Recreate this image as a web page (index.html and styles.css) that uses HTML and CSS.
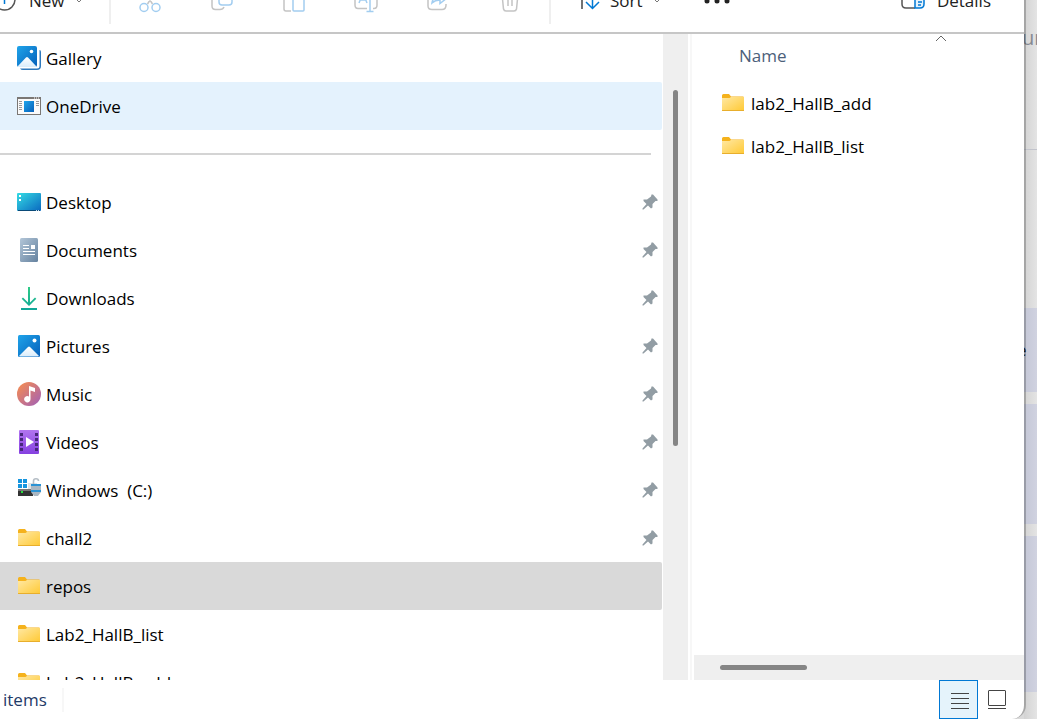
FILE: index.html
```html
<!DOCTYPE html>
<html lang="en">
<head>
<meta charset="utf-8">
<title>File Explorer</title>
<link rel="stylesheet" href="styles.css">
</head>
<body>
<svg class="defs" width="0" height="0" aria-hidden="true">
  <defs>
    <linearGradient id="gFolder" x1="0" y1="0" x2="1" y2="1"><stop offset="0" stop-color="#ffe8a3"/><stop offset="1" stop-color="#ffc934"/></linearGradient>
    <linearGradient id="gBlue" x1="0" y1="0" x2="1" y2="1"><stop offset="0" stop-color="#1fa4ea"/><stop offset="1" stop-color="#0660ba"/></linearGradient>
    <linearGradient id="gDesk" x1="0" y1="0" x2="1" y2="1"><stop offset="0" stop-color="#35dce4"/><stop offset="1" stop-color="#0a68c0"/></linearGradient>
    <linearGradient id="gDoc" x1="0" y1="0" x2="1" y2="1"><stop offset="0" stop-color="#b3c6d8"/><stop offset="1" stop-color="#65829f"/></linearGradient>
    <linearGradient id="gDown" x1="0" y1="0" x2="0" y2="1"><stop offset="0" stop-color="#2fcb86"/><stop offset="1" stop-color="#0fa699"/></linearGradient>
    <linearGradient id="gMusic" x1="0" y1="0" x2="1" y2="1"><stop offset="0.1" stop-color="#f18a56"/><stop offset="0.9" stop-color="#a964ae"/></linearGradient>
    <linearGradient id="gVideo" x1="0" y1="0" x2="0" y2="1"><stop offset="0" stop-color="#b275f0"/><stop offset="1" stop-color="#8540e0"/></linearGradient>
    <linearGradient id="gHill" x1="0" y1="0" x2="0" y2="1"><stop offset="0" stop-color="#ffffff"/><stop offset="1" stop-color="#d9ecfb"/></linearGradient>
    <symbol id="folder" viewBox="0 0 24 24">
      <path fill="#f5b21c" d="M1 4.500Q1 3 2.500 3H8l2 2.500H22.500V10H1z"/>
      <path fill="url(#gFolder)" d="M1 7H8.500L10 6H23V20H1z"/>
      <path fill="#e8ae2c" d="M1 19H23V19.500Q23 20 22 20H2Q1 20 1 19.500z"/>
    </symbol>
    <symbol id="pin" viewBox="0 0 16 16">
      <path fill="#929da4" d="M9.500 0.500L11 0.500L15.500 5.500V7H13.500L10.500 10V13.500L9 14.500L6 11.500L1.500 15.500H0.500V14.500L4.500 10L1.500 7V5.500H5L9 2.500z"/>
    </symbol>
  </defs>
</svg>

<div class="window">
  <header class="toolbar">
    <div class="toolbar-row">
      <button class="tool tool-new" type="button">
        <svg width="16" height="22" viewBox="6 0 16 22"><circle cx="10.500" cy="9.500" r="10.500" fill="none" stroke="#555" stroke-width="1.500"/><path d="M10.500 4v10M5.500 9h10" stroke="#0078d4" stroke-width="1.500"/></svg>
        <span>New</span>
        <svg width="8" height="8" viewBox="0 0 8 8"><path d="M1 2l3 3 3-3" fill="none" stroke="#777"/></svg>
      </button>
      <span class="divider"></span>
      <button class="tool tool-icon" type="button" aria-label="Cut"><svg width="24" height="24" viewBox="0 0 24 24" fill="none" stroke-width="1.500"><path d="M5 0L14.500 15M19 0L9.500 15" stroke="#c4c4c4"/><circle cx="6" cy="18.500" r="4" stroke="#a2cdf0"/><circle cx="18" cy="18.500" r="4" stroke="#a2cdf0"/></svg></button>
      <button class="tool tool-icon" type="button" aria-label="Copy"><svg width="24" height="24" viewBox="0 0 24 24" fill="none" stroke-width="1.500"><path d="M5 6Q2 6 2 9V17Q2 20.500 5.500 20.500H10Q13 20.500 14 18" stroke="#c4c4c4"/><rect x="9" y="2" width="13" height="14" rx="3" stroke="#a2cdf0"/></svg></button>
      <button class="tool tool-icon" type="button" aria-label="Paste"><svg width="24" height="24" viewBox="0 0 24 24" fill="none" stroke-width="1.500"><path d="M9 22H4Q2 22 2 20V2H18" stroke="#c4c4c4"/><rect x="11" y="7" width="11" height="15" rx="1" stroke="#a2cdf0"/></svg></button>
      <button class="tool tool-icon" type="button" aria-label="Rename"><svg width="24" height="24" viewBox="0 0 24 24" fill="none" stroke-width="1.500"><path d="M13 3H4Q1 3 1 6V16Q1 19.500 4 19.500H13M19 3H20Q23 3 23 6V16Q23 19.500 20 19.500H19" stroke="#c4c4c4"/><path d="M5 14L9 4l4 10M6 11h6M16 1V22M12.500 22.500H19.500" stroke="#a2cdf0"/></svg></button>
      <button class="tool tool-icon" type="button" aria-label="Share"><svg width="24" height="24" viewBox="0 0 24 24" fill="none" stroke-width="1.500"><path d="M9 3H6Q2 3 2 7V17Q2 20.500 6 20.500H16Q20 20.500 20 16V15" stroke="#c4c4c4"/><path d="M6 14Q7 7 14 7V3L21 9L14 14.500V11Q9 11 6 14z" stroke="#a2cdf0"/></svg></button>
      <button class="tool tool-icon" type="button" aria-label="Delete"><svg width="24" height="24" viewBox="0 0 24 24" fill="none" stroke="#c4c4c4" stroke-width="1.500"><path d="M2 5H22M4 5L5.500 20Q6 22 8 22H16Q18 22 18.500 20L20 5M10 9V17M14 9V17"/></svg></button>
      <span class="divider"></span>
      <button class="tool tool-sort" type="button">
        <svg width="20" height="20" viewBox="0 0 20 20" fill="none" stroke-width="1.500"><path d="M2 2V18" stroke="#444"/><path d="M12.500 2V17.500M6 11l6.500 6.500 6.500-6.500" stroke="#0078d4"/></svg>
        <span>Sort</span>
        <svg width="8" height="8" viewBox="0 0 8 8"><path d="M1 2l3 3 3-3" fill="none" stroke="#777"/></svg>
      </button>
      <button class="tool tool-more" type="button" aria-label="See more"><svg width="26" height="6" viewBox="0 0 26 6" fill="#222"><circle cx="3" cy="3" r="2.500"/><circle cx="13" cy="3" r="2.500"/><circle cx="23" cy="3" r="2.500"/></svg></button>
      <button class="tool tool-details" type="button">
        <svg width="24" height="20" viewBox="0 0 24 20" fill="none" stroke-width="1.500"><path d="M14 2H5Q1 2 1 6V13Q1 17 5 17H14" stroke="#555"/><path d="M14 2H19Q23 2 23 6V13Q23 17 19 17H14zM17 8h4M17 11h4M17 14h3" fill="#e6f3fc" stroke="#0078d4"/></svg>
        <span>Details</span>
      </button>
    </div>
  </header>

  <main class="panes">
    <nav class="nav" aria-label="Folders">
      <a class="item" href="#"><svg class="icon" viewBox="0 0 24 24"><path d="M22.500 4Q24 4 24 6V20Q24 24 20 24H6Q4 24 3 22.500H20Q22.500 22.500 22.500 20z" fill="#2e79bd"/><rect width="20" height="21" rx="2" fill="url(#gBlue)"/><path d="M0.500 20.500L9 11.500Q10 10.500 11 11.500L19.500 20.500Q19 21 18 21H2Q1 21 0.500 20.500z" fill="url(#gHill)"/><circle cx="14.500" cy="5.500" r="1.800" fill="#fff"/></svg><span>Gallery</span></a>
      <a class="item item-hover" href="#"><svg class="icon" viewBox="0 0 24 24"><rect x="0.500" y="3.500" width="23" height="17" fill="#fafafa" stroke="#7a7774"/><path d="M0 3H24V5H0z" fill="#7a7774"/><path d="M17 4h1M19 4h1M21 4h1" stroke="#fff"/><path d="M2 7.500h3M2 9.500h3M2 11.500h3M2 13.500h3M2 15.500h3M19 7.500h3M19 9.500h3M19 11.500h3" stroke="#999"/><rect x="7" y="7" width="10" height="11" fill="url(#gBlue)"/></svg><span>OneDrive</span></a>
      <hr class="separator">
      <a class="item" href="#"><svg class="icon" viewBox="0 0 24 24"><rect y="3" width="24" height="18" rx="1" fill="url(#gDesk)"/><path d="M1 20H23V21H1z" fill="#0a4a78"/><path d="M19 20.500h1M21 20.500h1" stroke="#cde"/><path d="M2 5h2v2H2zM2 9h2v2H2z" fill="#fff"/></svg><span>Desktop</span><svg class="pin"><use href="#pin"/></svg></a>
      <a class="item" href="#"><svg class="icon" viewBox="0 0 24 24"><rect x="3" width="18" height="24" rx="1.500" fill="url(#gDoc)"/><path d="M6 7.500h6M6 10.500h6M6 13.500h12M6 16.500h12" stroke="#fff"/><rect x="14" y="7" width="4" height="4" fill="#fff"/></svg><span>Documents</span><svg class="pin"><use href="#pin"/></svg></a>
      <a class="item" href="#"><svg class="icon" viewBox="0 0 24 24"><path fill="url(#gDown)" d="M11 1h2V16.500L18 11.500l1.300 1.300L12 20 4.700 12.800 6 11.500l5 5zM4 22H20V24H4z"/></svg><span>Downloads</span><svg class="pin"><use href="#pin"/></svg></a>
      <a class="item" href="#"><svg class="icon" viewBox="0 0 24 24"><rect x="1" y="1" width="22" height="22" rx="1.500" fill="url(#gBlue)"/><path d="M2 22L11 13Q12 12 13 13L22 22Q21 22.500 20.500 22.500H3.500Q3 22.500 2 22z" fill="url(#gHill)"/><circle cx="17.500" cy="6.500" r="2" fill="#fff"/></svg><span>Pictures</span><svg class="pin"><use href="#pin"/></svg></a>
      <a class="item" href="#"><svg class="icon" viewBox="0 0 24 24"><circle cx="12" cy="12" r="12" fill="url(#gMusic)"/><path d="M12 4L18 6V10L13.500 8.500V17A3.200 3.200 0 1 1 12 14.500z" fill="#fff"/></svg><span>Music</span><svg class="pin"><use href="#pin"/></svg></a>
      <a class="item" href="#"><svg class="icon" viewBox="0 0 24 24"><rect x="2" width="20" height="24" rx="1" fill="url(#gVideo)"/><path d="M3 3h3v3H3zM3 8h3v3H3zM3 13h3v3H3zM3 18h3v3H3zM18 3h3v3h-3zM18 8h3v3h-3zM18 13h3v3h-3zM18 18h3v3h-3z" fill="#48277c"/><path d="M9 7L17 12L9 17z" fill="#fff"/></svg><span>Videos</span><svg class="pin"><use href="#pin"/></svg></a>
      <a class="item" href="#"><svg class="icon" viewBox="0 0 24 24"><path d="M11 5H20V13H11z" fill="#dfe3e6"/><path d="M1 1h4v4H1zM6 1h4v4H6zM1 6h4v4H1zM6 6h4v4H6z" fill="#1595df"/><path d="M1 11H14V13H1z" fill="#777"/><path d="M1 13H16V18H1z" fill="#333"/><path d="M4 13h2v2H4z" fill="#25e03c"/><path d="M16.500 6V3Q16.500 0.800 19 0.800T21.500 3" fill="none" stroke="#b4bdc5" stroke-width="1.600"/><path d="M14 6H24V14L21 18H17L14 14z" fill="#aab7c2"/><path d="M14 6H24V8H14zM14 12H24V14H14z" fill="#2c93d4"/></svg><span class="drive">Windows  (C:)</span><svg class="pin"><use href="#pin"/></svg></a>
      <a class="item" href="#"><svg class="icon"><use href="#folder"/></svg><span>chall2</span><svg class="pin"><use href="#pin"/></svg></a>
      <a class="item item-selected" href="#"><svg class="icon"><use href="#folder"/></svg><span>repos</span></a>
      <a class="item" href="#"><svg class="icon"><use href="#folder"/></svg><span>Lab2_HallB_list</span></a>
      <a class="item" href="#"><svg class="icon"><use href="#folder"/></svg><span>Lab2_HallB_add</span></a>
    </nav>
    <div class="vscroll"><div class="vthumb"></div></div>
    <section class="content">
      <table class="files">
        <thead><tr><th scope="col">Name<svg class="sort-mark" width="12" height="7" viewBox="0 0 12 7"><path d="M1 6l5-5 5 5" fill="none" stroke="#666"/></svg></th></tr></thead>
        <tbody>
          <tr><td><a class="file" href="#"><svg class="icon"><use href="#folder"/></svg><span>lab2_HallB_add</span></a></td></tr>
          <tr><td><a class="file" href="#"><svg class="icon"><use href="#folder"/></svg><span>lab2_HallB_list</span></a></td></tr>
        </tbody>
      </table>
      <div class="hscroll"><div class="hthumb"></div></div>
    </section>
  </main>

  <footer class="status">
    <span class="count">items</span>
    <button class="view view-on" type="button" aria-label="Details view"><svg width="19" height="18" viewBox="0 0 19 18"><path d="M0 1.500h18M0 6.500h18M0 11.500h18M0 16.500h18" stroke="#444"/></svg></button>
    <button class="view" type="button" aria-label="Large icons view"><svg width="19" height="19" viewBox="0 0 19 19" fill="none" stroke="#444"><rect x="0.500" y="0.500" width="17" height="15" rx="0.500"/><path d="M0 18.500h18"/></svg></button>
  </footer>
</div>

<aside class="backdrop">
  <div class="strip strip-top"><span class="cut-title">ur</span></div>
  <div class="strip strip-gap"></div>
  <div class="strip block block-a"><span class="cut-letter">e</span></div>
  <div class="strip block block-b"></div>
  <div class="strip block block-c"></div>
</aside>
</body>
</html>
```
FILE: styles.css
```css
* { box-sizing: border-box; }

body {
  margin: 0;
  height: 100vh;
  display: flex;
  overflow: hidden;
  background: #dadada;
  color: #000;
  font: 17px/24px "Segoe UI", "Open Sans", "Noto Sans", sans-serif;
}

.defs { position: absolute; }

svg { flex: none; display: block; }

button {
  font: inherit;
  color: inherit;
  background: none;
  border: 0;
  padding: 0;
}

a { color: inherit; text-decoration: none; }

.window {
  position: relative;
  z-index: 1;
  flex: 1;
  min-width: 0;
  margin-right: -2px;
  display: flex;
  flex-direction: column;
  background: #fff;
  background-clip: padding-box;
  border-right: 2px solid rgba(0, 0, 0, 0.22);
  border-bottom-right-radius: 14px;
}

/* Toolbar: only the lower half is on screen */
.toolbar {
  flex: none;
  height: 34px;
  display: flex;
  align-items: flex-end;
  overflow: hidden;
  border-bottom: 2px solid #c6c6c6;
}

.toolbar-row {
  flex: 1;
  height: 62px;
  display: flex;
  align-items: center;
  color: #222;
}

.tool { display: flex; align-items: center; }
.tool-new { width: 109px; gap: 13px; }
.tool-new span { width: 33px; }
.tool-icon { width: 72px; justify-content: center; }
.tool-sort { margin-left: 26px; gap: 10px; }
.tool-more { margin-left: 43px; }
.tool-details { margin-left: auto; margin-right: 33px; gap: 12px; }

.divider {
  width: 2px;
  height: 46px;
  margin: 0 3px;
  background: #efefef;
}
.tool-new + .divider { margin-left: 0; }

.panes {
  flex: 1;
  min-height: 0;
  display: grid;
  grid-template-columns: 663fr 25px 336fr;
}

.nav { overflow: hidden; min-width: 0; padding-right: 1px; }

.item {
  height: 48px;
  padding: 0 4px 0 17px;
  display: flex;
  align-items: center;
  gap: 5px;
}
.item span, .file span { padding-top: 2px; }
.item-hover { background: #e4f2fd; border-radius: 0 2px 2px 0; }
.item-selected { background: #d9d9d9; border-radius: 0 2px 2px 0; }

.icon { width: 24px; height: 24px; }
.pin { width: 16px; height: 16px; margin-left: auto; }
.drive { white-space: pre; }

.separator {
  height: 2px;
  margin: 23px 11px 23px 0;
  border: 0;
  background: #d4d4d4;
}

.vscroll { background: #efefef; padding: 56px 10px 0; }
.vthumb { height: 356px; border-radius: 3px; background: #858585; }

.content {
  min-width: 0;
  margin-left: 2px;
  border-left: 2px solid #f7f7f7;
  padding-left: 2px;
  display: flex;
  flex-direction: column;
  justify-content: space-between;
}

.files { width: 100%; border-collapse: collapse; }
.files th {
  position: relative;
  height: 47px;
  padding: 0 0 4px 45px;
  text-align: left;
  font-weight: 400;
  color: #4c607a;
}
.sort-mark { position: absolute; top: 1px; left: 73%; }
.files td { height: 43px; padding: 0 0 0 27px; }
.file { display: flex; align-items: center; gap: 6px; }

.hscroll { height: 25px; padding: 10px 26px; background: #efefef; }
.hthumb { width: 87px; height: 5px; border-radius: 3px; background: #858585; }

.status {
  flex: none;
  height: 39px;
  display: flex;
  align-items: center;
  padding-right: 7px;
}
.count {
  width: 64px;
  padding-left: 3px;
  margin-right: auto;
  border-right: 2px solid #f7f7f7;
  color: #1f3a68;
}
.view {
  width: 39px;
  height: 39px;
  display: flex;
  align-items: center;
  justify-content: center;
}
.view-on { background: #e5f3fb; border: 1px solid #0078d4; padding: 3px 0 0 3px; }

/* Sliver of the page behind the window */
.backdrop {
  width: 13px;
  overflow: hidden;
  background: linear-gradient(to right, #d3d3d3, #e4e4e4);
}
.strip { position: relative; }
.strip-top { height: 150px; border-bottom: 1px solid #c2c4cc; }
.strip-gap { height: 158px; }
.block { margin-bottom: 12px; background: linear-gradient(to right, #c4c7d6, #d0d2e0); }
.block-a { height: 84px; }
.block-b { height: 120px; }
.block-c { height: 156px; }
.cut-title { position: absolute; top: 26px; left: -2px; font-size: 20px; color: #858a92; }
.cut-letter { position: absolute; top: 30px; left: -7px; color: #222; }
```
